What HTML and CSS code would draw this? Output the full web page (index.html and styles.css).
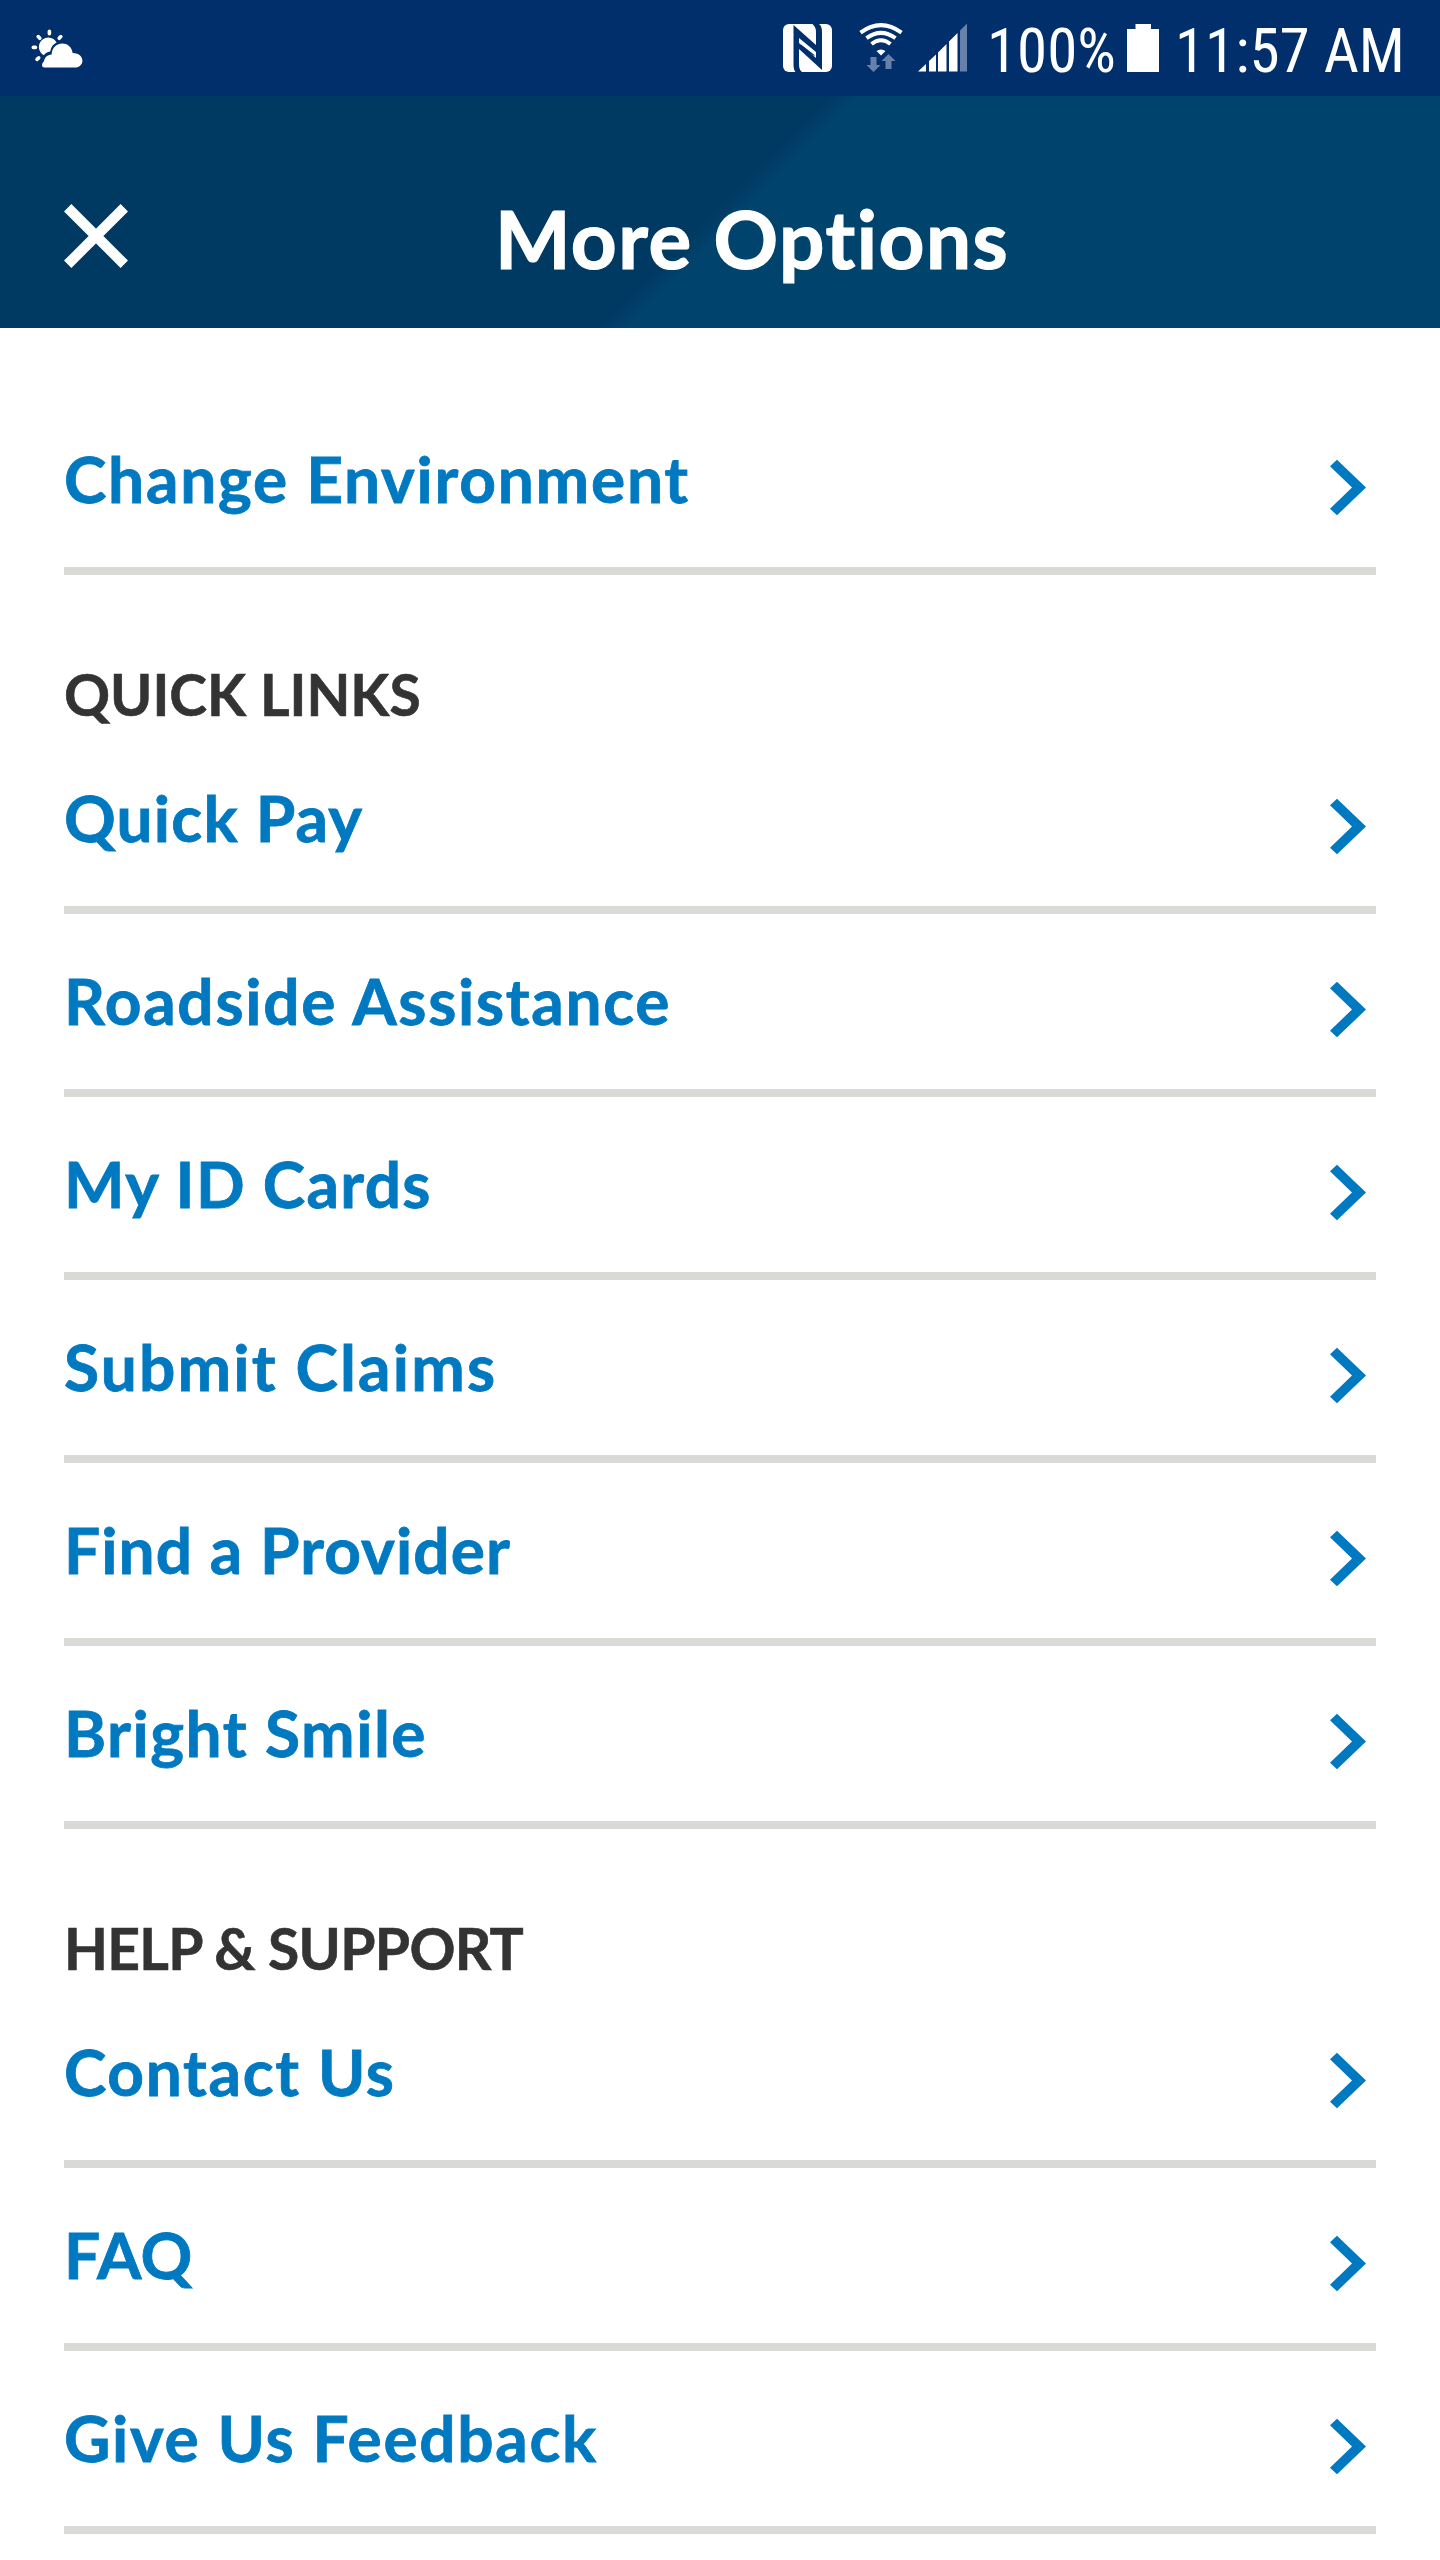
FILE: index.html
```html
<!DOCTYPE html>
<html lang="en">
<head>
<meta charset="utf-8">
<title>More Options</title>
<link rel="stylesheet" href="styles.css">
</head>
<body>
<svg width="0" height="0" class="defs" aria-hidden="true">
  <symbol id="chevron" viewBox="0 0 36 57"><path fill="currentColor" d="M7 .7 36 28.5 7 56.3 0 49.7 22 28.5 0 7.3Z"/></symbol>
</svg>
<div class="status">
  <svg class="weather" width="52" height="40" viewBox="0 0 52 40">
    <g stroke="#fff" stroke-width="3.6" stroke-linecap="round">
      <path d="M18.4 2.3v2.4M7.2 7.6l1.6 1.7M29.8 7.6l-1.6 1.7M2.3 18.4h2.2M6 30.3l1.7-1.5"/>
    </g>
    <path fill="#fff" d="M12.8 26.2A9.4 9.4 0 1 1 25.6 13.6C22.3 15.2 20 18 19.2 22.5 16.2 23 14.5 24.2 12.8 26.2Z"/>
    <path fill="#fff" d="M13.5 38.6C10.5 38.6 10.2 34.5 13 32.3c.6-3.7 3.4-6.4 7.6-6.7C21.2 11 40.3 11 41.6 24c7 0 9.8 4 9.8 7.800 0 3.800-3.200 6.800-7.200 6.800Z"/>
  </svg>
  <svg class="nfc" width="49" height="48" viewBox="0 0 49 48">
    <rect width="49" height="48" rx="6" fill="#fff"/>
    <path fill="#002f6c" d="M10.500 1 33 21V8Q33 3 29.500 0H36Q39 2 39 8V46L16 25V40Q16 46 19 48H12.500Q10.500 46 10.500 40Z"/>
    <path fill="#fff" d="M16 14 33 28V34L16 19Z"/>
    <path fill="#002f6c" d="M18 20.500 31.500 31V32L18 24Z"/>
  </svg>
  <svg class="wifi" width="44" height="50" viewBox="0 0 44 50">
    <g fill="none" stroke="#fff" stroke-width="4">
      <path d="M1.500 9.600Q22-5.400 42.500 9.600M7.500 15.200Q22 4.600 36.500 15.200M12.500 21Q22 13.500 31.500 21"/>
    </g>
    <path fill="#fff" d="M17.500 28Q22 25 26.500 28L22 32.500Z"/>
    <path fill="#6781aa" d="M11.500 34h6v8h4l-7 7-7-7h4ZM26.500 46v-8h-4l7-7 7 7h-4v8Z"/>
  </svg>
  <svg class="signal" width="49" height="49" viewBox="0 0 49 49">
    <path fill="#fff" d="M0 48.500 8 41v7.500ZM11 48.500V38l7-6.500v17ZM20 48.500V29.500l8.500-8.500v27.500ZM31 48.500V18.500L39.500 10v38.500Z"/>
    <path fill="#6781aa" d="M42 48.500V7.500L49 .5v48Z"/>
  </svg>
  <span class="percent">100%</span>
  <svg class="battery" width="32" height="48" viewBox="0 0 32 48"><path fill="#fff" d="M8.500 0H24v5h8v43H0V5h8.500Z"/></svg>
  <span class="clock">11:57 AM</span>
</div>
<header class="header">
  <svg class="close" width="64" height="64" viewBox="0 0 64 64"><path stroke="#fff" stroke-width="10.400" d="M3.700 3.700 60.300 60.300M60.300 3.700 3.700 60.300"/></svg>
  <h1 class="title">More Options</h1>
</header>
<main class="menu">
  <a class="link change"><span>Change Environment</span><svg class="chev"><use href="#chevron"/></svg></a>
  <h2 class="section">QUICK LINKS</h2>
  <a class="link pay"><span>Quick Pay</span><svg class="chev"><use href="#chevron"/></svg></a>
  <a class="link roadside"><span>Roadside Assistance</span><svg class="chev"><use href="#chevron"/></svg></a>
  <a class="link cards"><span>My ID Cards</span><svg class="chev"><use href="#chevron"/></svg></a>
  <a class="link claims"><span>Submit Claims</span><svg class="chev"><use href="#chevron"/></svg></a>
  <a class="link provider"><span>Find a Provider</span><svg class="chev"><use href="#chevron"/></svg></a>
  <a class="link smile"><span>Bright Smile</span><svg class="chev"><use href="#chevron"/></svg></a>
  <h2 class="section support">HELP &amp; SUPPORT</h2>
  <a class="link contact"><span>Contact Us</span><svg class="chev"><use href="#chevron"/></svg></a>
  <a class="link faq"><span>FAQ</span><svg class="chev"><use href="#chevron"/></svg></a>
  <a class="link feedback"><span>Give Us Feedback</span><svg class="chev"><use href="#chevron"/></svg></a>
</main>
</body>
</html>
```
FILE: styles.css
```css
* { box-sizing: border-box; }
body {
  margin: 0;
  height: 2560px;
  overflow: hidden;
  background: #fff;
  font-family: Lato, "Liberation Sans", sans-serif;
}
svg { flex: none; display: block; }
.defs { display: none; }

.status {
  display: flex;
  align-items: flex-start;
  height: 96px;
  padding: 24px 0 0 31px;
  background: #002f6c;
  color: #fff;
  font: 400 61px/60px "Roboto Condensed", Roboto, sans-serif;
  white-space: nowrap;
}
.weather { margin-top: 5px; }
.nfc { margin-left: 700px; }
.wifi { margin: -1px 0 0 27px; }
.signal { margin: -1px 0 0 15px; }
.percent { margin: -3px 0 0 20px; width: 134px; }
.battery { margin-left: 6px; }
.clock { margin: -3px 0 0 16px; }

.header {
  display: flex;
  align-items: flex-start;
  height: 232px;
  padding: 108px 0 0 64px;
  background: linear-gradient(135deg, #003a63 49.800%, #00436d 51.300%);
  color: #fff;
}
.title {
  margin: -6px 0 0 367px;
  font-size: 80px;
  line-height: 80px;
  font-weight: 700;
  letter-spacing: 1.490px;
  -webkit-text-stroke: 1.200px currentColor;
}

.menu { padding: 64px 64px 0; }
.link {
  display: flex;
  justify-content: space-between;
  height: 183px;
  padding: 55px 10px 0 0;
  border-bottom: 8px solid #d9dad5;
  color: #0079c1;
  font-size: 64px;
  line-height: 64px;
  font-weight: 700;
  -webkit-text-stroke: .8px currentColor;
}
.chev { width: 36px; height: 57px; margin-top: 12px; }
.section {
  height: 156px;
  margin: 0;
  padding-top: 89px;
  color: #333;
  font-size: 57px;
  line-height: 60px;
  font-weight: 700;
  -webkit-text-stroke: .6px currentColor;
}

.support { letter-spacing: -.700px; }
.change { letter-spacing: 1.740px; }
.pay { letter-spacing: 1.240px; }
.roadside { letter-spacing: 1.700px; }
.cards { letter-spacing: 1.350px; }
.claims { letter-spacing: 2.190px; }
.provider { letter-spacing: 1.090px; }
.smile { letter-spacing: 1.510px; }
.contact { letter-spacing: 1.670px; }
.faq { letter-spacing: .5px; }
.feedback { letter-spacing: 1.700px; }
```
